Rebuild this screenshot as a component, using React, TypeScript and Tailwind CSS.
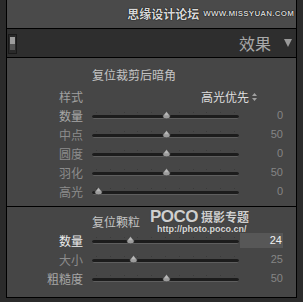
const cjk = "font-['Noto_Sans_CJK_SC','Noto_Sans',sans-serif]";

function Thumb() {
  return (
    <svg width="9" height="8" viewBox="0 0 9 8">
      <path d="M4.5 0 L7.8 4.2 Q9 7.6 4.5 7.8 Q0 7.6 1.2 4.2 Z" fill="#9c9c9c" stroke="#3a3a3a" strokeWidth="0.6" />
      <path d="M4.5 1.2 L6.6 4.2 L2.4 4.2 Z" fill="#b8b8b8" />
    </svg>
  );
}

function Slider({ pos }: { pos: number }) {
  const ticks = [0, 1, 2, 3, 4, 5, 6, 7, 8, 9, 10];
  return (
    <div className="relative w-[147px] h-[19px] shrink-0">
      <div className="absolute left-[4px] right-[4px] top-[6px] flex justify-between">
        {ticks.map((t) => (
          <span key={t} className="w-px h-px bg-[#3a3a3a]" />
        ))}
      </div>
      <div className="absolute left-0 right-0 top-[9px] h-[4px] rounded-full bg-[#1c1c1c] border-b border-[#5e5e5e]" />
      <div className="absolute top-[5px]" style={{ left: pos - 4 }}>
        <Thumb />
      </div>
    </div>
  );
}

function Row({
  label,
  value,
  pos,
  bright,
  active,
}: {
  label: string;
  value: string;
  pos: number;
  bright?: boolean;
  active?: boolean;
}) {
  return (
    <div className="flex items-center h-[19px]">
      <div
        className={`w-[76px] text-right text-[12px] leading-none ${
          active ? "text-[#ececec]" : bright ? "text-[#a6a6a6]" : "text-[#8c8c8c]"
        }`}
      >
        {label}
      </div>
      <div className="ml-[9px]">
        <Slider pos={pos} />
      </div>
      <div className="w-[44px] flex justify-end">
        {active ? (
          <div className="w-[43px] h-[15px] bg-[#575757] text-right pr-[1px] text-[11px] leading-[15px] text-[#f0f0f0] font-['Liberation_Sans',sans-serif]">
            {value}
          </div>
        ) : (
          <div className="text-[11px] leading-none text-[#858585] font-['Liberation_Sans',sans-serif]">
            {value}
          </div>
        )}
      </div>
    </div>
  );
}

export default function App() {
  return (
    <div className={`w-[303px] h-[302px] bg-[#2b2b2b] overflow-hidden ${cjk}`}>
      <div className="ml-[6px] w-[291px] h-[298px] border-x border-black flex flex-col">
        <div className="h-[29px] bg-[#4a4a4a] border-b border-black flex items-center justify-end pr-[2px] gap-[4px] [text-shadow:0_0_1px_#000,0_0_1px_#000]">
          <span className="text-[12px] font-bold text-[#d8d8d8] leading-none">思缘设计论坛</span>
          <span className="text-[8px] font-bold text-[#d0d0d0] leading-none font-['Liberation_Sans',sans-serif] tracking-[0.2px]">
            WWW.MISSYUAN.COM
          </span>
        </div>
        <div className="h-[29px] bg-[#2e2e2e] border-b border-black flex items-center">
          <div className="ml-[1px] mt-[1px] w-[9px] h-[20px] border border-[#1a1a1a] bg-[#2a2a2a] flex flex-col justify-center px-[1px]">
            <div className="h-[7px] bg-[#9e9e9e]" />
            <div className="h-[6px] bg-[#555555]" />
          </div>
          <span className="ml-auto text-[16px] leading-none text-[#a9a9a9]">效果</span>
          <svg width="8" height="8" viewBox="0 0 8 8" className="ml-[13px] mr-[4px]">
            <path d="M0 0 L8 0 L4 8 Z" fill="#9a9a9a" />
          </svg>
        </div>
        <div className="bg-[#464646] border-b border-black pt-[7px] pb-[5px]">
          <div className="h-[19px] flex items-center pl-[85px] text-[12px] leading-none text-[#c4c4c4]">
            复位裁剪后暗角
          </div>
          <div className="h-[19px] mt-[3px] flex items-center">
            <div className="w-[76px] text-right text-[12px] leading-none text-[#a0a0a0]">样式</div>
            <div className="ml-[118px] flex items-center gap-[3px] text-[12px] leading-none text-[#dedede]">
              高光优先
              <svg width="5" height="8" viewBox="0 0 5 8">
                <path d="M2.5 0 L5 3 L0 3 Z M2.5 8 L5 5 L0 5 Z" fill="#a0a0a0" />
              </svg>
            </div>
          </div>
          <Row label="数量" value="0" pos={74} bright />
          <Row label="中点" value="50" pos={74} />
          <Row label="圆度" value="0" pos={74} />
          <Row label="羽化" value="50" pos={74} />
          <Row label="高光" value="0" pos={6} />
        </div>
        <div className="relative flex-1 bg-[#464646] border-b border-black pt-[5px]">
          <div className="h-[19px] flex items-center pl-[85px] text-[12px] leading-none text-[#c4c4c4]">
            复位颗粒
          </div>
          <div className="absolute left-[143px] top-[2px] flex flex-col items-start gap-[1px] [text-shadow:0_0_1px_#333]">
            <div className="flex items-center gap-[3px] h-[15px]">
              <span className="text-[17px] leading-[15px] font-bold text-[#cfcfcf] font-['Liberation_Sans',sans-serif] tracking-[-0.5px]">
                POCO
              </span>
              <span className="text-[12px] leading-[12px] font-bold text-[#cfcfcf]">摄影专题</span>
            </div>
            <span className="ml-[7px] text-[9px] font-bold leading-[9px] text-[#d8d8d8] font-['Liberation_Sans',sans-serif]">
              http://photo.poco.cn/
            </span>
          </div>
          <Row label="数量" value="24" pos={38} active />
          <Row label="大小" value="25" pos={41} />
          <Row label="粗糙度" value="50" pos={74} bright />
        </div>
      </div>
    </div>
  );
}
